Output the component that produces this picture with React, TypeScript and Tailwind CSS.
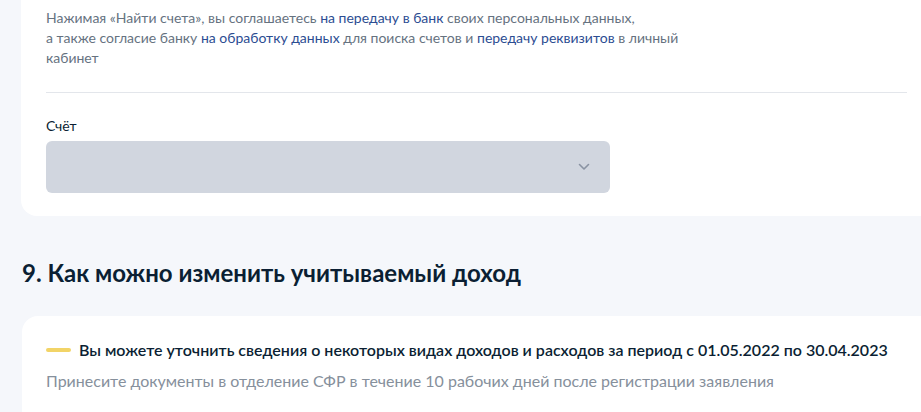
import React from "react";

function Chevron() {
  return (
    <svg width="12" height="8" viewBox="0 0 12 8" fill="none">
      <path d="M1.5 1.5 6 6l4.5-4.5" stroke="#8a93a3" strokeWidth="1.6" strokeLinecap="round" strokeLinejoin="round" />
    </svg>
  );
}

export default function App() {
  const link = "text-[#2c4d92]";
  return (
    <div className="w-[921px] h-[412px] overflow-hidden bg-[#f5f7fb] font-['Lato','Noto_Sans',sans-serif]">
      <div className="ml-[21px] w-[910px] bg-white rounded-bl-[16px] pt-2 pb-[23px] pl-[25px] pr-6">
        <p className="text-[14px] leading-[20px] text-[#66727f]">
          Нажимая «Найти счета», вы соглашаетесь <span className={link}>на передачу в банк</span> своих персональных данных,
          <br />
          а также согласие банку <span className={link}>на обработку данных</span> для поиска счетов и{" "}
          <span className={link}>передачу реквизитов</span> в личный
          <br />
          кабинет
        </p>
        <div className="mt-6 h-px bg-[#e3e6eb]" />
        <div className="mt-[23px] text-[14px] leading-[20px] text-[#0b1f33]">Счёт</div>
        <div className="mt-[5px] w-[564px] h-[52px] rounded-[6px] bg-[#d1d6df] flex items-center justify-end pr-5">
          <Chevron />
        </div>
      </div>

      <h2 className="mt-[41px] ml-[22px] text-[24px] leading-[32px] font-bold text-[#0b1f33]">
        9. Как можно изменить учитываемый доход
      </h2>

      <div className="mt-[27px] ml-[22px] w-[910px] bg-white rounded-tl-[16px] pt-[22px] pl-6 pb-6">
        <div className="flex items-center gap-2">
          <span className="w-[25px] h-[4px] rounded-full bg-[#f2d467]" />
          <span className="text-[16px] leading-[24px] font-semibold text-[#0b1f33]">
            Вы можете уточнить сведения о некоторых видах доходов и расходов за период с 01.05.2022 по 30.04.2023
          </span>
        </div>
        <p className="mt-[7px] text-[16px] leading-[24px] text-[#86909c]">
          Принесите документы в отделение СФР в течение 10 рабочих дней после регистрации заявления
        </p>
      </div>
    </div>
  );
}
